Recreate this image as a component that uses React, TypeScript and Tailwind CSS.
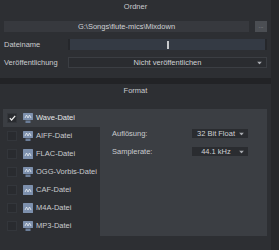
import React from 'react';

const formats = [
  { name: 'Wave-Datei', stand: true, checked: true },
  { name: 'AIFF-Datei', stand: true },
  { name: 'FLAC-Datei', stand: false },
  { name: 'OGG-Vorbis-Datei', stand: true },
  { name: 'CAF-Datei', stand: false },
  { name: 'M4A-Datei', stand: false },
  { name: 'MP3-Datei', stand: true },
];

function FileIcon({ stand }: { stand: boolean }) {
  return (
    <svg width="10" height="10" viewBox="0 0 10 10" className="shrink-0">
      <rect x="0" y="0" width="10" height={stand ? 7 : 10} rx="0.5" fill="#7d90ad" />
      <path d={stand ? 'M2 5 L3.5 2 L5 5 L6.5 2 L8 5' : 'M2 7 L3.5 4 L5 7 L6.5 4 L8 7'} stroke="#e8edf4" strokeWidth="0.8" fill="none" />
      {stand && <rect x="2.5" y="7.5" width="5" height="2.5" fill="#6b7d98" />}
    </svg>
  );
}

function Arrow() {
  return (
    <svg width="5" height="3" viewBox="0 0 5 3" className="absolute right-[4px] top-1/2 -translate-y-1/2">
      <path d="M0 0 L5 0 L2.5 3 Z" fill="#a9acb1" />
    </svg>
  );
}

function Select({ value, className }: { value: string; className: string }) {
  return (
    <div className={`relative flex items-center justify-center h-[11px] bg-[#2a2c30] border border-[#3b3e43] text-[#cfd1d4] ${className}`}>
      {value}
      <Arrow />
    </div>
  );
}

export default function App() {
  return (
    <div className="w-[279px] h-[250px] flex bg-[#2d2f33] text-[7.5px] leading-none text-[#c9cbce] overflow-hidden" style={{ fontFamily: '"Liberation Sans", Arial, sans-serif' }}>
      <div className="w-[271px] flex flex-col">
        {/* Ordner */}
        <div className="h-[78px] flex flex-col">
          <div className="h-[14px] flex items-center justify-center">Ordner</div>
          <div className="mt-[7px] flex items-center px-[4px] gap-[6px]">
            <div className="w-[245px] h-[11px] bg-[#37393e] flex items-center justify-center text-[#cfd1d4]">G:\Songs\flute-mics\Mixdown</div>
            <div className="w-[12px] h-[11px] bg-[#4b4e53] flex items-center justify-center text-[6px] text-[#9a9da2] pb-[2px]">...</div>
          </div>
          <div className="mt-[7px] flex items-center pl-[4px]">
            <span className="w-[64px]">Dateiname</span>
            <div className="w-[199px] h-[11px] bg-[#343a44] border-x-[2px] border-[#25272b] flex items-center justify-center">
              <div className="w-[2px] h-[8px] bg-[#c8cacd]" />
            </div>
          </div>
          <div className="mt-[7px] flex items-center pl-[4px]">
            <span className="w-[64px]">Veröffentlichung</span>
            <Select value="Nicht veröffentlichen" className="w-[199px]" />
          </div>
        </div>

        <div className="h-[6px] bg-[#222326]" />

        {/* Format */}
        <div className="flex-1 flex flex-col">
          <div className="h-[14px] flex items-center justify-center">Format</div>
          <div className="mt-[11px] flex">
            <div className="w-[100px] pl-[3px] flex flex-col">
              {formats.map((f) => (
                <div key={f.name} className={`h-[18px] flex items-center pl-[4px] whitespace-nowrap ${f.checked ? 'bg-[#3b3e43] text-[#e4e6e8]' : ''}`}>
                  <div className="w-[10px] h-[10px] shrink-0 bg-[#292b2f] border border-[#33363b] flex items-center justify-center">
                    {f.checked && (
                      <svg width="7" height="6" viewBox="0 0 7 6">
                        <path d="M0.8 3.2 L2.6 5 L6.2 0.8" stroke="#f0f0f0" strokeWidth="1.2" fill="none" />
                      </svg>
                    )}
                  </div>
                  <div className="ml-[6px]"><FileIcon stand={f.stand} /></div>
                  <span className="ml-[3px]">{f.name}</span>
                </div>
              ))}
            </div>
            <div className="w-[167px] h-[127px] bg-[#3b3e43] pl-[12px] pt-[19px] flex flex-col gap-[7px]">
              <div className="flex items-center">
                <span className="w-[79px]">Auflösung:</span>
                <Select value="32 Bit Float" className="w-[58px] pr-[8px]" />
              </div>
              <div className="flex items-center">
                <span className="w-[79px]">Samplerate:</span>
                <Select value="44.1 kHz" className="w-[58px] pr-[8px]" />
              </div>
            </div>
          </div>
        </div>
      </div>
      <div className="w-[8px] bg-[#26282b]" />
    </div>
  );
}
